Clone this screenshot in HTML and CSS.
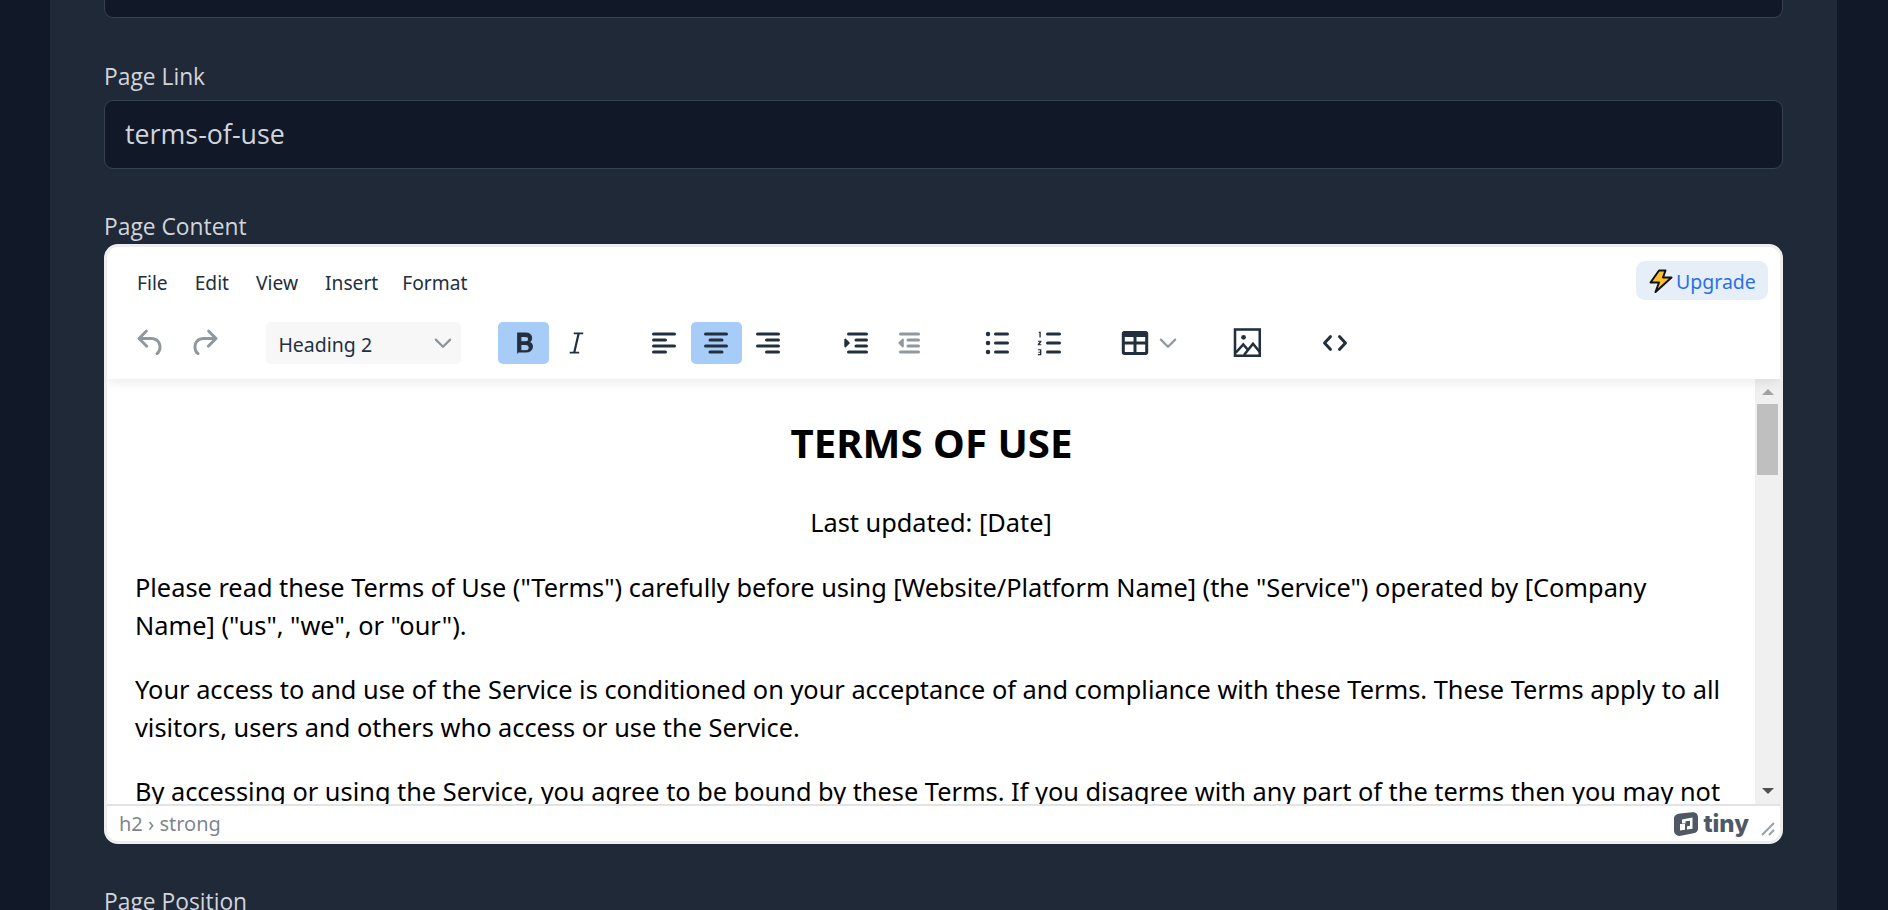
FILE: index.html
```html
<!DOCTYPE html>
<html lang="en">
<head>
    <meta charset="UTF-8">
    <meta name="viewport" content="width=device-width, initial-scale=1.0">
    <title>Edit Page</title>
    <link rel="stylesheet" href="styles.css">
</head>
<body>
    <main class="panel">
        <div class="input-cut"></div>

        <label class="field-label label-link">Page Link</label>
        <div class="input">terms-of-use</div>

        <label class="field-label label-content">Page Content</label>
        <div class="editor">
            <div class="editor-head">
                <div class="menubar">
                    <nav class="menus">
                        <span>File</span>
                        <span>Edit</span>
                        <span>View</span>
                        <span>Insert</span>
                        <span>Format</span>
                    </nav>
                    <button class="upgrade">
                        <svg class="bolt" width="24" height="24" viewBox="0 0 24 24"><path d="M10 1.5h6.5L14 8.5h8.5L6.5 23 10 13.5H1.5z" fill="#ffc02e" stroke="#111" stroke-width="2" stroke-linejoin="round"/></svg>
                        <span>Upgrade</span>
                    </button>
                </div>
                <div class="toolbar">
                    <div class="group group-history">
                        <button class="tool off"><svg width="36" height="36" viewBox="0 0 24 24"><path d="M6.4 8H12c3.7 0 6.2 2 6.8 5.1.6 2.7-.4 5.6-2.3 6.8a1 1 0 0 1-1-1.8c1.1-.6 1.8-2.7 1.4-4.6-.5-2.1-2.1-3.500-4.900-3.500H6.400l3.300 3.300a1 1 0 1 1-1.400 1.400l-5-5a1 1 0 0 1 0-1.400l5-5a1 1 0 0 1 1.400 1.400L6.400 8z"/></svg></button>
                        <button class="tool off"><svg width="36" height="36" viewBox="0 0 24 24"><path d="M17.600 8H12c-3.700 0-6.200 2-6.800 5.100-.6 2.700.4 5.600 2.300 6.800a1 1 0 0 0 1-1.800c-1.100-.6-1.800-2.700-1.400-4.600.5-2.100 2.100-3.500 4.900-3.500h5.600l-3.300 3.300a1 1 0 1 0 1.400 1.400l5-5a1 1 0 0 0 0-1.400l-5-5a1 1 0 0 0-1.400 1.400L17.600 8z"/></svg></button>
                    </div>
                    <div class="select">
                        <span>Heading 2</span>
                        <svg class="chevron" width="18" height="11" viewBox="0 0 16 10"><path d="M1.500 1.500 8 8l6.500-6.500" fill="none" stroke-width="2" stroke-linecap="round" stroke-linejoin="round"/></svg>
                    </div>
                    <div class="group">
                        <button class="tool active"><svg width="36" height="36" viewBox="0 0 24 24"><path stroke="currentColor" stroke-width=".7" d="M7.800 19V5.400h5.100c1.300 0 2.400.3 3.100.9.800.6 1.100 1.400 1.100 2.400 0 .7-.2 1.200-.5 1.700-.4.5-.9.8-1.500 1 .8.2 1.400.5 1.800 1 .4.5.7 1.200.7 1.900 0 1.100-.4 2-1.200 2.700-.8.600-1.900 1-3.200 1H7.800zm2.100-7.800h3c.7 0 1.200-.2 1.600-.5.4-.3.600-.7.600-1.300 0-.6-.2-1-.6-1.300-.4-.3-.9-.4-1.700-.4H9.900v3.500zm0 1.700v4.200h3.300c.7 0 1.300-.2 1.700-.5.4-.4.6-.8.6-1.400 0-1.500-.9-2.300-2.500-2.300H9.900z"/></svg></button>
                        <button class="tool"><svg width="36" height="36" viewBox="0 0 24 24"><path d="M10.500 5h6.300v1.200h-2.400L11.700 17.800h2.400V19H7.800v-1.200h2.400l2.700-11.600h-2.400z"/></svg></button>
                    </div>
                    <div class="group">
                        <button class="tool"><svg width="36" height="36" viewBox="0 0 24 24"><path d="M5 5h14a1 1 0 0 1 0 2H5a1 1 0 1 1 0-2zm0 4h8a1 1 0 0 1 0 2H5a1 1 0 1 1 0-2zm0 8h8a1 1 0 0 1 0 2H5a1 1 0 0 1 0-2zm0-4h14a1 1 0 0 1 0 2H5a1 1 0 0 1 0-2z"/></svg></button>
                        <button class="tool active"><svg width="36" height="36" viewBox="0 0 24 24"><path d="M5 5h14a1 1 0 0 1 0 2H5a1 1 0 1 1 0-2zm3 4h8a1 1 0 0 1 0 2H8a1 1 0 1 1 0-2zm0 8h8a1 1 0 0 1 0 2H8a1 1 0 0 1 0-2zm-3-4h14a1 1 0 0 1 0 2H5a1 1 0 0 1 0-2z"/></svg></button>
                        <button class="tool"><svg width="36" height="36" viewBox="0 0 24 24"><path d="M5 5h14a1 1 0 0 1 0 2H5a1 1 0 1 1 0-2zm6 4h8a1 1 0 0 1 0 2h-8a1 1 0 0 1 0-2zm0 8h8a1 1 0 0 1 0 2h-8a1 1 0 0 1 0-2zm-6-4h14a1 1 0 0 1 0 2H5a1 1 0 0 1 0-2z"/></svg></button>
                    </div>
                    <div class="group">
                        <button class="tool"><svg width="36" height="36" viewBox="0 0 24 24"><path d="M7 5h12a1 1 0 0 1 0 2H7a1 1 0 1 1 0-2zm5 4h7a1 1 0 0 1 0 2h-7a1 1 0 0 1 0-2zm0 4h7a1 1 0 0 1 0 2h-7a1 1 0 0 1 0-2zm-5 4h12a1 1 0 0 1 0 2H7a1 1 0 0 1 0-2zM5.200 9.200l2.400 2.300a.7.7 0 0 1 0 1l-2.400 2.300a.6.6 0 0 1-1-.4V9.600a.6.6 0 0 1 1-.4z"/></svg></button>
                        <button class="tool off"><svg width="36" height="36" viewBox="0 0 24 24"><path d="M7 5h12a1 1 0 0 1 0 2H7a1 1 0 1 1 0-2zm5 4h7a1 1 0 0 1 0 2h-7a1 1 0 0 1 0-2zm0 4h7a1 1 0 0 1 0 2h-7a1 1 0 0 1 0-2zm-5 4h12a1 1 0 0 1 0 2H7a1 1 0 0 1 0-2zM8.200 9.200l-2.400 2.300a.7.7 0 0 0 0 1l2.400 2.300a.6.6 0 0 0 1-.4V9.600a.6.6 0 0 0-1-.4z"/></svg></button>
                    </div>
                    <div class="group">
                        <button class="tool"><svg width="36" height="36" viewBox="0 0 24 24"><path d="M11 5h8a1 1 0 0 1 0 2h-8a1 1 0 0 1 0-2zm0 6h8a1 1 0 0 1 0 2h-8a1 1 0 0 1 0-2zm0 6h8a1 1 0 0 1 0 2h-8a1 1 0 0 1 0-2z"/><circle cx="6" cy="6" r="1.500"/><circle cx="6" cy="12" r="1.500"/><circle cx="6" cy="18" r="1.500"/></svg></button>
                        <button class="tool"><svg width="36" height="36" viewBox="0 0 24 24"><path d="M11 5h8a1 1 0 0 1 0 2h-8a1 1 0 0 1 0-2zm0 6h8a1 1 0 0 1 0 2h-8a1 1 0 0 1 0-2zm0 6h8a1 1 0 0 1 0 2h-8a1 1 0 0 1 0-2z"/><path d="M5.200 4.500h1.300v3.800H5.600V5.300h-.4zM4.600 10.500h2.300v.9l-1.200 1.400h1.200v.7H4.500v-.8l1.300-1.500H4.600zM4.600 16.200h2.300v3.900H4.600v-.7h1.400v-.9H4.900v-.6H6v-1H4.600z"/></svg></button>
                    </div>
                    <div class="group group-split">
                        <button class="tool"><svg width="36" height="36" viewBox="0 0 24 24"><path fill-rule="evenodd" d="M4.800 4h14.400c.9 0 1.600.7 1.600 1.600v12.800c0 .9-.7 1.600-1.600 1.600H4.800c-.9 0-1.600-.7-1.600-1.600V5.600C3.200 4.700 3.900 4 4.800 4zM5.200 8v3h5.800V8zm7.800 0v3h5.800V8zm-7.800 5v5h5.800v-5zm7.800 0v5h5.800v-5z"/></svg></button>
                        <svg class="chevron" width="18" height="11" viewBox="0 0 16 10"><path d="M1.500 1.500 8 8l6.500-6.500" fill="none" stroke-width="2" stroke-linecap="round" stroke-linejoin="round"/></svg>
                    </div>
                    <div class="group">
                        <button class="tool"><svg class="outline" width="36" height="36" viewBox="0 0 24 24"><rect x="4" y="3" width="16.500" height="17.500"/><circle class="dot" cx="9.700" cy="8.200" r="1.600"/><path d="M4.500 18.500l5-5.500 3.500 4M10 20l6-7.500 4.500 5.500"/></svg></button>
                    </div>
                    <div class="group">
                        <button class="tool"><svg width="36" height="36" viewBox="0 0 24 24"><path d="M9.800 15.700a1 1 0 0 1-1.500 1.300l-4-4.300a1 1 0 0 1 0-1.400l4-4.300a1 1 0 0 1 1.500 1.300L6.400 12l3.400 3.700zm4.400 0L17.600 12l-3.400-3.700a1 1 0 0 1 1.500-1.300l4 4.300a1 1 0 0 1 0 1.400l-4 4.300a1 1 0 0 1-1.500-1.300z"/></svg></button>
                    </div>
                </div>
            </div>

            <div class="editor-body">
                <div class="content">
                    <h2>TERMS OF USE</h2>
                    <p class="center">Last updated: [Date]</p>
                    <p>Please read these Terms of Use ("Terms") carefully before using [Website/Platform Name] (the "Service") operated by [Company Name] ("us", "we", or "our").</p>
                    <p>Your access to and use of the Service is conditioned on your acceptance of and compliance with these Terms. These Terms apply to all visitors, users and others who access or use the Service.</p>
                    <p>By accessing or using the Service, you agree to be bound by these Terms. If you disagree with any part of the terms then you may not access the Service.</p>
                </div>
                <div class="scrollbar">
                    <span class="arrow arrow-up"></span>
                    <div class="track"><div class="thumb"></div></div>
                    <span class="arrow arrow-down"></span>
                </div>
            </div>

            <div class="statusbar">
                <span class="path">h2 › strong</span>
                <div class="brand">
                    <svg width="24" height="24" viewBox="0 0 24 24"><path fill-rule="evenodd" d="M6 1.500 18 .2C21.500-.1 24 2 24 5v11.500c0 2.500-1.500 4-3.500 4.500L7 23.800C3 24.500 0 22 0 18.500V6.500C0 3.800 2.800 1.800 6 1.500zM8 7.500v4h3.500V9.300l4.500-.5v5l-3 .4v3.300l5.500-.8V5.500zM6 12v6.500l5-.7V12z"/></svg>
                    <span>tiny</span>
                </div>
                <svg class="resize" width="14" height="14" viewBox="0 0 14 14"><path d="M1 13 13 1M8 13l5-5" fill="none" stroke-width="2"/></svg>
            </div>
        </div>

        <label class="field-label label-position">Page Position</label>
    </main>
</body>
</html>
```

FILE: styles.css
```css
* {
    box-sizing: border-box;
}

html, body {
    height: 910px;
    margin: 0;
    overflow: hidden;
}

body {
    background: #111827;
    font-family: "Noto Sans", sans-serif;
    padding: 0 51px 0 50px;
}

.panel {
    background: #1f2937;
    height: 910px;
    padding: 0 54px;
    overflow: hidden;
}

.input-cut {
    height: 18px;
    background: #111827;
    border: 1px solid #374151;
    border-top: none;
    border-radius: 0 0 9px 9px;
}

.field-label {
    display: block;
    font-family: "Open Sans", sans-serif;
    font-size: 22.8px;
    line-height: 30px;
    color: #d1d5db;
}

.label-link {
    margin-top: 44px;
    margin-bottom: 8px;
}

.label-content {
    margin-top: 43px;
    margin-bottom: 0;
    height: 32px;
}

.label-position {
    margin-top: 43px;
}

.input {
    height: 69px;
    background: #111827;
    border: 1px solid #374151;
    border-radius: 9px;
    padding: 0 20px;
    font-family: "Open Sans", sans-serif;
    font-size: 26.8px;
    line-height: 66px;
    color: #d1d5db;
}

/* editor */
.editor {
    height: 600px;
    background: #fff;
    border: 3px solid #eee;
    border-radius: 14px;
    display: flex;
    flex-direction: column;
    overflow: hidden;
}

.editor-head {
    height: 132px;
    position: relative;
    z-index: 1;
    box-shadow: 0 3px 10px rgba(34, 47, 62, 0.1);
}

.menubar {
    height: 75px;
    padding: 14px 12px 0 30px;
    display: flex;
    justify-content: space-between;
    align-items: flex-start;
}

.menus {
    display: flex;
    gap: 27px;
    margin-top: 7px;
    font-size: 19.2px;
    line-height: 30px;
    color: #222f3e;
}

.menus span:last-child {
    margin-left: -3px;
}

.upgrade {
    display: flex;
    align-items: center;
    gap: 3px;
    width: 132px;
    height: 39px;
    padding: 2px 0 0 13px;
    border: none;
    border-radius: 9px;
    background: #e6eff8;
    color: #2b6fe8;
    font-family: "Noto Sans", sans-serif;
    font-size: 19.5px;
}

.upgrade .bolt {
    margin-top: -2px;
}

.toolbar {
    display: flex;
    align-items: center;
    gap: 37.4px;
    padding-left: 18px;
}

.group {
    display: flex;
    align-items: center;
    gap: 1px;
}

.group-history {
    gap: 2px;
}

.group-split {
    gap: 0;
    width: 72px;
}

.group-split .tool {
    width: 47px;
    flex: none;
}

.tool {
    width: 51px;
    height: 42px;
    padding: 0;
    border: none;
    border-radius: 5px;
    background: none;
    color: #222f3e;
    display: flex;
    align-items: center;
    justify-content: center;
}

.tool svg {
    flex: none;
    fill: #222f3e;
}

.tool.off svg {
    fill: rgba(34, 47, 62, 0.5);
}

.tool.active {
    background: #a6ccf7;
}

.tool svg.outline {
    fill: none;
    stroke: #222f3e;
    stroke-width: 1.7;
}

.tool svg.outline .dot {
    fill: #222f3e;
    stroke: none;
}

.select {
    width: 194.4px;
    height: 42px;
    padding: 2px 9px 0 12px;
    border-radius: 5px;
    background: #f7f7f7;
    display: flex;
    align-items: center;
    justify-content: space-between;
    font-size: 19.5px;
    color: #222f3e;
}

.select .chevron {
    margin-top: -2px;
}

.chevron {
    stroke: rgba(34, 47, 62, 0.5);
}

.editor-body {
    flex: 1;
    min-height: 0;
    display: flex;
}

.content {
    flex: 1;
    min-width: 0;
    overflow: hidden;
    padding: 40px 30px 0 28px;
    color: #000;
    font-size: 25.35px;
    line-height: 38px;
}

.content h2 {
    margin: 0 0 36.5px;
    padding-left: 3px;
    text-align: center;
    font-size: 40.2px;
    line-height: 47px;
}

.content p {
    margin: 0 0 26px;
}

.content p.center {
    padding-left: 2px;
    text-align: center;
    margin-bottom: 27px;
}

.scrollbar {
    width: 25px;
    background: #f0f0f0;
    display: flex;
    flex-direction: column;
    align-items: center;
    padding: 10px 0;
}

.arrow {
    width: 0;
    height: 0;
    border-left: 6px solid transparent;
    border-right: 6px solid transparent;
}

.arrow-up {
    border-bottom: 6px solid #a3a3a3;
}

.arrow-down {
    border-top: 6px solid #505050;
}

.track {
    flex: 1;
    width: 100%;
    padding: 9px 2px 0;
}

.thumb {
    height: 71px;
    background: #bfbfbf;
}

.statusbar {
    height: 37px;
    border-top: 2px solid #e3e3e3;
    padding: 0 5px 0 12px;
    display: flex;
    align-items: center;
    font-size: 20px;
    color: rgba(34, 47, 62, 0.6);
    position: relative;
}

.path {
    flex: 1;
}

.brand {
    display: flex;
    align-items: center;
    gap: 5px;
    margin-right: 12px;
    color: #4f5966;
    fill: #4f5966;
    font-family: Inter, sans-serif;
    font-weight: 800;
    font-size: 24px;
    line-height: 24px;
}

.resize {
    stroke: #9aa0a8;
    align-self: flex-end;
    margin-bottom: 5px;
}
```
